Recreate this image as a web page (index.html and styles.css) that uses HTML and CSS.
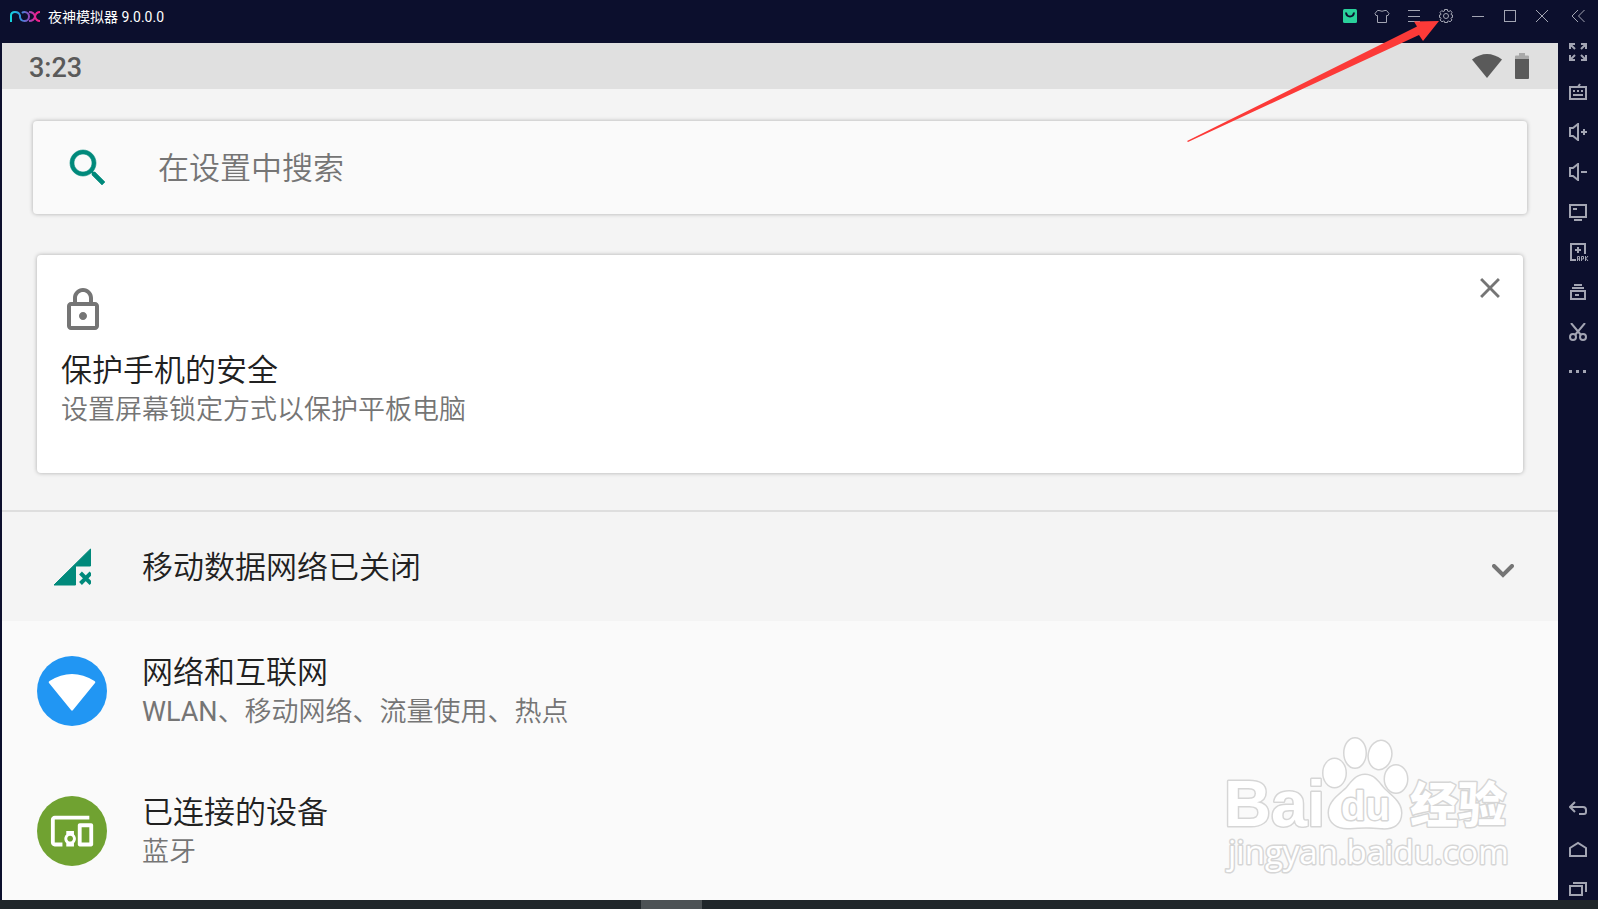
FILE: index.html
```html
<!DOCTYPE html>
<html lang="zh-CN">
<head>
    <meta charset="UTF-8">
    <meta name="viewport" content="width=device-width, initial-scale=1.0">
    <title>夜神模拟器</title>
    <link rel="stylesheet" href="styles.css">
</head>
<body>

<header class="titlebar">
    <svg class="logo" width="32" height="14" viewBox="0 0 32 14" aria-hidden="true">
        <defs>
            <linearGradient id="nox" gradientUnits="userSpaceOnUse" x1="0" y1="0" x2="32" y2="0">
                <stop offset="0" stop-color="#0fe0dc"/>
                <stop offset="0.35" stop-color="#2f95e0"/>
                <stop offset="0.6" stop-color="#8a4fc0"/>
                <stop offset="0.85" stop-color="#f0208c"/>
            </linearGradient>
        </defs>
        <g fill="none" stroke="url(#nox)" stroke-width="2">
            <path d="M2 13V6.500Q2 3 6 3T11 6.500V8Q11.500 12 15.500 12A4.500 4.500 0 0 0 15.500 3Q14 3 13 4"/>
            <path d="M20 3Q25 3 26 7.500T31 12M31 3Q27 3 26 7.500T20 12"/>
        </g>
    </svg>
    <span class="app-name">夜神模拟器 9.0.0.0</span>
    <div class="window-buttons">
        <button aria-label="应用中心">
            <svg width="14" height="14" viewBox="0 0 14 14"><rect class="store" width="14" height="14" rx="1.500"/><path class="smile" d="M3 3.500Q3.500 7.500 7 7.500T11 3.500"/></svg>
        </button>
        <button aria-label="主题">
            <svg width="16" height="14" viewBox="0 0 16 14"><path d="M5 1.500Q8 3 11 1.500L12.500 1.500L15 4.500L14 6.500H12.500V13.500H3.500V6.500H2L1 4.500L3.500 1.500Z"/></svg>
        </button>
        <button aria-label="菜单">
            <svg width="12" height="12" viewBox="0 0 12 12"><path d="M0 .5H12M0 6.500H12M0 11.500H12"/></svg>
        </button>
        <button aria-label="设置">
            <svg width="16" height="16" viewBox="0 0 16 16"><path d="M6.500 1.500H9.500V3L11 3.500L12.500 2.500L14 4.500L13 6L13.500 7H14.500V9.500H13.500L13 10.500L14 12L12 13.800L10.800 13L9.500 13.300V14.500H6.500V13.300L5.200 13L4 13.800L2 12L3 10.500L2.500 9.500H1.500V7H2.500L3 6L2 4.500L3.800 2.500L5 3.500L6.500 3Z"/><circle cx="8" cy="8" r="2.500"/></svg>
        </button>
        <button aria-label="最小化">
            <svg width="12" height="12" viewBox="0 0 12 12"><path d="M0 6.500H12"/></svg>
        </button>
        <button aria-label="最大化">
            <svg width="12" height="12" viewBox="0 0 12 12"><rect x=".5" y=".5" width="11" height="11"/></svg>
        </button>
        <button aria-label="关闭">
            <svg width="12" height="12" viewBox="0 0 12 12"><path d="M0 0L12 12M12 0L0 12"/></svg>
        </button>
        <button class="collapse" aria-label="收起侧栏">
            <svg width="14" height="12" viewBox="0 0 14 12"><path d="M7 0L1 6L7 12M13.500 0L7.500 6L13.500 12"/></svg>
        </button>
    </div>
</header>

<div class="emulator">
    <main class="screen">
        <div class="status-bar">
            <time>3:23</time>
            <div class="status-icons">
                <svg width="30" height="26" viewBox="0 0 30 26"><path d="M0 6.500Q15-4.500 30 6.500L15 25Z" fill="#5a5a5a"/></svg>
                <svg width="14" height="26" viewBox="0 0 14 26"><path d="M0 7V3.500Q0 2.500 1 2.500H4V0H10V2.500H13Q14 2.500 14 3.500V7Z" fill="#a9a9a9"/><path d="M0 6H14V25Q14 26 13 26H1Q0 26 0 25Z" fill="#5a5a5a"/></svg>
            </div>
        </div>

        <div class="suggestions">
            <label class="search">
                <svg width="48" height="48" viewBox="0 0 24 24"><path fill="#00897b" stroke="#00897b" stroke-width=".3" d="M15.500 14h-.79l-.28-.27C15.410 12.590 16 11.110 16 9.500 16 5.910 13.090 3 9.500 3S3 5.910 3 9.500 5.910 16 9.500 16c1.610 0 3.090-.59 4.230-1.570l.27.28v.79l5 4.990L20.490 19l-4.990-5zm-6 0C7.010 14 5 11.990 5 9.500S7.010 5 9.500 5 14 7.010 14 9.500 11.990 14 9.500 14z"/></svg>
                <input type="text" placeholder="在设置中搜索" aria-label="在设置中搜索">
            </label>

            <section class="card">
                <svg width="48" height="48" viewBox="0 0 24 24"><path fill="#757575" d="M18 8h-1V6c0-2.760-2.240-5-5-5S7 3.240 7 6v2H6c-1.100 0-2 .9-2 2v10c0 1.100.9 2 2 2h12c1.100 0 2-.9 2-2V10c0-1.100-.9-2-2-2zM9 6c0-1.660 1.340-3 3-3s3 1.340 3 3v2H9V6zm9 14H6V10h12v10zm-6-3c1.100 0 2-.9 2-2s-.9-2-2-2-2 .9-2 2 .9 2 2 2z"/></svg>
                <h2>保护手机的安全</h2>
                <p>设置屏幕锁定方式以保护平板电脑</p>
                <button class="dismiss" aria-label="关闭">
                    <svg width="34" height="34" viewBox="0 0 24 24"><path fill="#757575" d="M19 6.410L17.590 5 12 10.590 6.410 5 5 6.410 10.590 12 5 17.590 6.410 19 12 13.410 17.590 19 19 17.590 13.410 12z"/></svg>
                </button>
            </section>
        </div>

        <button class="condition">
            <span class="row-icon">
                <svg width="38" height="38" viewBox="0 0 38 38"><path fill="#00897b" stroke="#00897b" stroke-linejoin="round" d="M1 37L37.500 1V18H22.500V37Z"/><path fill="none" stroke="#00897b" stroke-width="4" d="M27.500 25L38 35.500M38 25L27.500 35.500"/></svg>
            </span>
            <span class="condition-title">移动数据网络已关闭</span>
            <svg class="chevron" width="22" height="14" viewBox="0 0 22 14"><path d="M2 2L11 11L20 2" fill="none" stroke="#757575" stroke-width="4" stroke-linecap="round"/></svg>
        </button>

        <a class="row" href="#network">
            <svg class="row-icon" width="70" height="70" viewBox="0 0 70 70"><circle cx="35" cy="35" r="35" fill="#2196f3"/><path fill="#fff" d="M12 27Q11 26 12.500 25Q35 11 57.500 25Q59 26 58 27L36 54Q35 55.500 34 54Z"/></svg>
            <span class="row-text">
                <strong>网络和互联网</strong>
                <small><span class="latin">WLAN</span>、移动网络、流量使用、热点</small>
            </span>
        </a>

        <a class="row" href="#devices">
            <svg class="row-icon" width="70" height="70" viewBox="0 0 70 70"><circle cx="35" cy="35" r="35" fill="#70a231"/><path transform="translate(12 12) scale(1.920)" fill="#fff" d="M3 6h18V4H3c-1.100 0-2 .9-2 2v12c0 1.100.9 2 2 2h4v-2H3V6zm10 6H9v1.780c-.61.55-1 1.330-1 2.220s.39 1.670 1 2.220V20h4v-1.780c.61-.55 1-1.340 1-2.220s-.39-1.670-1-2.220V12zm-2 5.500c-.83 0-1.500-.67-1.500-1.500s.67-1.500 1.500-1.500 1.500.67 1.500 1.500-.67 1.500-1.500 1.500zM22 8h-6c-.5 0-1 .5-1 1v10c0 .5.5 1 1 1h6c.5 0 1-.5 1-1V9c0-.5-.5-1-1-1zm-1 10h-4v-8h4v8z"/></svg>
            <span class="row-text">
                <strong>已连接的设备</strong>
                <small>蓝牙</small>
            </span>
        </a>

        <svg class="watermark" width="300" height="150" viewBox="20 10 300 150">
            <ellipse cx="134.500" cy="53" rx="11" ry="14"/>
            <ellipse cx="155" cy="33" rx="10.500" ry="14.500"/>
            <ellipse cx="180" cy="35" rx="11" ry="14" transform="rotate(12 180 35)"/>
            <ellipse cx="196" cy="59" rx="11" ry="13.500"/>
            <path d="M165 55C174 55 178 62 184 69C191 76 201 82 201 93C201 105 192 109 181 108C172 107 160 107 150 108C138 109 129 103 129 93C129 82 138 76 146 69C152 62 156 55 165 55Z"/>
            <text class="bai" x="24" y="106">Bai</text>
            <text class="du" x="141" y="100">du</text>
            <text class="jingyan" x="210" y="102">经验</text>
            <text class="site" x="28" y="144">jingyan.baidu.com</text>
        </svg>
    </main>

    <nav class="sidebar">
        <div class="tools">
            <button aria-label="全屏">
                <svg width="18" height="18" viewBox="0 0 18 18"><path d="M1 6V1H6M1 1L6 6M12 1H17V6M17 1L12 6M1 12V17H6M1 17L6 12M12 17H17V12M17 17L12 12"/></svg>
            </button>
            <button aria-label="键盘">
                <svg width="18" height="18" viewBox="0 0 18 18"><path d="M1 4H17V16H1ZM9 4L11 1M4 12H14M4 8H6M8 8H10M12 8H14"/></svg>
            </button>
            <button aria-label="音量加">
                <svg width="18" height="18" viewBox="0 0 18 18"><path d="M1 5H4L9 1V17L4 13H1ZM12 9H18M15 6V12"/></svg>
            </button>
            <button aria-label="音量减">
                <svg width="18" height="18" viewBox="0 0 18 18"><path d="M1 5H4L9 1V17L4 13H1ZM12 9H18"/></svg>
            </button>
            <button aria-label="屏幕">
                <svg width="18" height="18" viewBox="0 0 18 18"><path d="M1 2H17V14H1ZM4 6H8M5 17H13"/></svg>
            </button>
            <button aria-label="安装 APK">
                <svg width="20" height="18" viewBox="0 0 20 18"><path d="M7 17H2V1H16V11M6 7H12M9 4V10"/><path stroke-width="1" d="M8.500 18V13.500H10.500V18M8.500 16H10.500M12.500 18V13.500H14.500V16H12.500M16.500 13V18M19 13L17 15.500L19 18"/></svg>
            </button>
            <button aria-label="多开">
                <svg width="18" height="18" viewBox="0 0 18 18"><path d="M2 8H16V16H2ZM3 5H15M5 2H13M6 12H10"/></svg>
            </button>
            <button aria-label="截图">
                <svg width="18" height="18" viewBox="0 0 18 18"><path d="M2 0L12 12M16 0L6 12"/><circle cx="4" cy="14" r="3"/><circle cx="14" cy="14" r="3"/></svg>
            </button>
            <button aria-label="更多">
                <svg width="18" height="18" viewBox="0 0 18 18"><path stroke-width="3" d="M0 8.500H3M7 8.500H10M14 8.500H17"/></svg>
            </button>
        </div>
        <div class="tools">
            <button aria-label="返回">
                <svg width="18" height="18" viewBox="0 0 18 18"><path d="M6 2L1 7L6 12M1 7H14Q17 7 17 10V12Q17 14 15 14H10"/></svg>
            </button>
            <button aria-label="主页">
                <svg width="18" height="18" viewBox="0 0 18 18"><path d="M1 16V8L9 3L17 8V16Z"/></svg>
            </button>
            <button aria-label="最近任务">
                <svg width="18" height="18" viewBox="0 0 18 18"><path d="M1 6H13V15H1ZM4 3H17V12"/></svg>
            </button>
        </div>
    </nav>
</div>

<footer class="taskbar"><span></span></footer>

<svg class="arrow" width="260" height="124" viewBox="0 0 260 124"><path fill="#fc3a38" d="M259 1L234 1.500L237 6.500L7 121L8 122L239 15L243 21Z"/></svg>

</body>
</html>
```
FILE: styles.css
```css
* {
    box-sizing: border-box;
}

body {
    display: flex;
    flex-direction: column;
    height: 100vh;
    margin: 0;
    overflow: hidden;
    position: relative;
    background-color: #0c0f2d;
    color: #212121;
    font-family: Roboto, "Noto Sans CJK SC", sans-serif;
}

svg {
    display: block;
    flex: none;
}

button {
    padding: 0;
    border: none;
    background: none;
    font: inherit;
    color: inherit;
    cursor: pointer;
}

/* Title bar */
.titlebar {
    display: flex;
    align-items: flex-start;
    height: 43px;
    flex: none;
    padding-left: 9px;
}

.logo {
    margin-top: 9px;
}

.app-name {
    margin-left: 7px;
    font-size: 14px;
    line-height: 34px;
    color: white;
}

.window-buttons {
    display: flex;
    margin-left: auto;
}

.window-buttons button {
    display: grid;
    place-items: center;
    width: 32px;
    height: 32px;
}

.window-buttons .collapse {
    width: 40px;
}

.window-buttons svg {
    fill: none;
    stroke: #a3a5b3;
    stroke-width: 1;
}

.window-buttons .store {
    fill: #2ad19b;
    stroke: none;
}

.window-buttons .smile {
    stroke: #0c0f2d;
    stroke-width: 2;
}

/* Android screen */
.emulator {
    display: flex;
    flex: 1;
    min-height: 0;
    padding-left: 2px;
}

.screen {
    flex: 1;
    position: relative;
    overflow: hidden;
    background-color: #fafafa;
    font-weight: 350;
}

.status-bar {
    display: flex;
    justify-content: space-between;
    align-items: center;
    height: 46px;
    padding: 0 29px 0 27px;
    background-color: #e0e0e0;
    color: #5a5a5a;
    font-size: 27px;
    font-weight: 500;
}

.status-bar time {
    padding-top: 3px;
}

.status-icons {
    display: flex;
    gap: 13px;
}

.suggestions {
    padding: 32px 31px 37px;
    background-color: #f4f4f4;
    border-bottom: 2px solid #dedede;
}

.search {
    display: flex;
    align-items: center;
    gap: 46px;
    height: 93px;
    padding: 0 31px;
    border-radius: 4px;
    background-color: #fafafa;
    box-shadow: 0 0 4px rgba(0, 0, 0, 0.3);
}

.search input {
    flex: 1;
    min-width: 0;
    padding: 2px 0 0;
    border: none;
    outline: none;
    background: none;
    font: inherit;
    font-size: 31px;
}

.search input::placeholder {
    color: #757575;
}

.card {
    position: relative;
    margin: 41px 4px 0;
    padding: 31px 24px 44px;
    border-radius: 4px;
    background-color: white;
    box-shadow: 0 0 4px rgba(0, 0, 0, 0.3);
}

.card > svg {
    margin-left: -2px;
}

.card h2 {
    margin: 17px 0 0;
    font-size: 31px;
    font-weight: inherit;
    line-height: 40px;
}

.card p {
    margin: 0;
    font-size: 27px;
    line-height: 38px;
    color: #757575;
}

.dismiss {
    position: absolute;
    top: 16px;
    right: 16px;
}

.condition {
    display: flex;
    align-items: center;
    width: 100%;
    height: 109px;
    padding: 0 44px 0 35px;
    background-color: #f4f4f4;
    text-align: left;
}

.condition-title {
    flex: 1;
    padding-top: 2px;
    font-size: 31px;
    line-height: 40px;
}

.chevron {
    margin-top: 8px;
}

.row-icon {
    display: grid;
    place-items: center;
    width: 70px;
    margin-right: 35px;
}

.row {
    display: flex;
    align-items: center;
    height: 140px;
    padding: 0 35px;
    color: inherit;
    text-decoration: none;
}

.row-text {
    padding-top: 2px;
}

.row strong,
.row small {
    display: block;
}

.row strong {
    font-size: 31px;
    font-weight: inherit;
    line-height: 40px;
}

.row small {
    font-size: 27px;
    line-height: 38px;
    color: #757575;
}

.latin {
    font-weight: 400;
}

/* Watermark */
.watermark {
    position: absolute;
    right: 38px;
    bottom: 20px;
    fill: white;
    stroke: #d6d6d6;
    stroke-width: 3;
    stroke-linejoin: round;
    paint-order: stroke;
    pointer-events: none;
}

.bai,
.du {
    font-family: "Liberation Sans", Arial, sans-serif;
    font-weight: 700;
}

.bai {
    font-size: 65px;
}

.du {
    font-size: 40px;
}

.jingyan {
    font-family: "Noto Sans CJK SC", sans-serif;
    font-size: 48px;
    font-weight: 900;
}

.site {
    font-family: "Open Sans", sans-serif;
    font-size: 33px;
    font-weight: 400;
}

/* Right tool strip */
.sidebar {
    display: flex;
    flex-direction: column;
    justify-content: space-between;
    width: 40px;
    padding-bottom: 2px;
}

.tools {
    display: flex;
    flex-direction: column;
    gap: 22px;
}

.tools button {
    height: 18px;
    padding-left: 11px;
}

.tools svg {
    fill: none;
    stroke: #a3a5b3;
    stroke-width: 2;
}

.taskbar {
    flex: none;
    height: 9px;
    padding-left: 641px;
    background-color: #20262a;
}

.taskbar span {
    display: block;
    width: 61px;
    height: 9px;
    background-color: #4d5255;
}

/* Pointer to the settings gear */
.arrow {
    position: absolute;
    top: 20px;
    right: 158px;
    pointer-events: none;
}
```
